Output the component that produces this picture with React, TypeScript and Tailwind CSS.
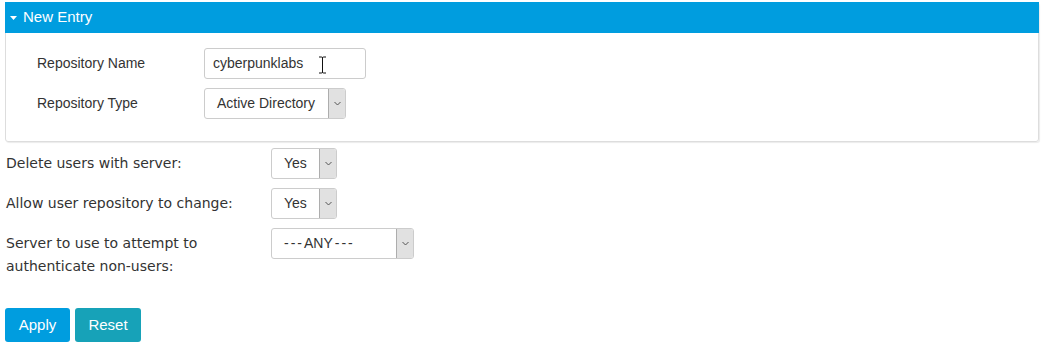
import { ReactNode } from "react";

// Fake select with the grey arrow box on the right
function Select({ value, width }: { value: ReactNode; width: string }) {
    return (
        <div
            className={`${width} h-[31px] flex items-stretch bg-white border border-[#cccccc] rounded-[3px] overflow-hidden`}
        >
            <div className="flex-1 flex items-center pl-3 text-[14px] text-[#333333] font-['Liberation_Sans',Arial,sans-serif]">
                {value}
            </div>
            <div className="w-[17px] flex items-center justify-center bg-[#e1e1e1] border-l border-[#adadad]">
                <svg width="7" height="5" viewBox="0 0 7 5">
                    <path d="M0.5 1 L3.5 4 L6.5 1" fill="none" stroke="#555" strokeWidth="1" />
                </svg>
            </div>
        </div>
    );
}

function FormRow({ label, children }: { label: ReactNode; children: ReactNode }) {
    return (
        <div className="flex items-start">
            <div className="w-[265px] text-[14px] leading-[23px] text-[#333333] font-['DejaVu_Sans',Verdana,sans-serif] pt-[4px]">
                {label}
            </div>
            {children}
        </div>
    );
}

export default function App() {
    return (
        <div className="w-[1041px] h-[359px] bg-white pt-[2px] font-['Liberation_Sans',Arial,sans-serif]">
            {/* Panel */}
            <div className="ml-[5px] w-[1034px] border border-[#dddddd] rounded-[3px] shadow-[1px_1px_1px_rgba(0,0,0,0.08)]">
                <div className="h-[31px] bg-[#009ddf] flex items-center pl-[5px] text-white text-[15px] -mx-px -mt-px">
                    <svg width="7" height="4" viewBox="0 0 7 4" className="mr-[6px] mt-[1px]">
                        <path d="M0 0 H7 L3.5 4 Z" fill="#ffffff" />
                    </svg>
                    New Entry
                </div>
                <div className="pl-[31px] pt-[15px] pb-[22px] flex flex-col gap-[9px]">
                    <div className="flex items-center">
                        <div className="w-[167px] text-[14px] text-[#333333]">Repository Name</div>
                        <div className="relative w-[162px] h-[31px] border border-[#cccccc] rounded-[3px] flex items-center pl-2 text-[14px] text-[#333333]">
                            cyberpunklabs
                            <svg
                                width="9"
                                height="18"
                                viewBox="0 0 9 18"
                                className="absolute left-[113px] top-[7px]"
                            >
                                <path
                                    d="M1 1 H3.5 M5.5 1 H8 M4.5 1.5 V16.5 M1 17 H3.5 M5.5 17 H8 M3.5 1 Q4.5 1 4.5 2 Q4.5 1 5.5 1 M3.5 17 Q4.5 17 4.5 16 Q4.5 17 5.5 17"
                                    fill="none"
                                    stroke="#111"
                                    strokeWidth="1"
                                />
                            </svg>
                        </div>
                    </div>
                    <div className="flex items-center">
                        <div className="w-[167px] text-[14px] text-[#333333]">Repository Type</div>
                        <Select value="Active Directory" width="w-[142px]" />
                    </div>
                </div>
            </div>

            {/* Settings */}
            <div className="pl-[6px] pt-[6px] flex flex-col gap-[9px]">
                <FormRow label="Delete users with server:">
                    <Select value="Yes" width="w-[66px]" />
                </FormRow>
                <FormRow label="Allow user repository to change:">
                    <Select value="Yes" width="w-[66px]" />
                </FormRow>
                <FormRow
                    label={
                        <>
                            Server to use to attempt to
                            <br />
                            authenticate non-users:
                        </>
                    }
                >
                    <Select
                        value={
                            <>
                                <span className="tracking-[2px]">---</span>ANY
                                <span className="tracking-[2px] ml-[2px]">---</span>
                            </>
                        }
                        width="w-[143px]"
                    />
                </FormRow>
            </div>

            {/* Buttons */}
            <div className="pl-[5px] mt-[30px] flex gap-[5px]">
                <button className="w-[65px] h-[34px] bg-[#009ddf] text-white text-[15px] rounded-[3px]">
                    Apply
                </button>
                <button className="w-[66px] h-[34px] bg-[#17a2b8] text-white text-[15px] rounded-[3px]">
                    Reset
                </button>
            </div>
        </div>
    );
}
